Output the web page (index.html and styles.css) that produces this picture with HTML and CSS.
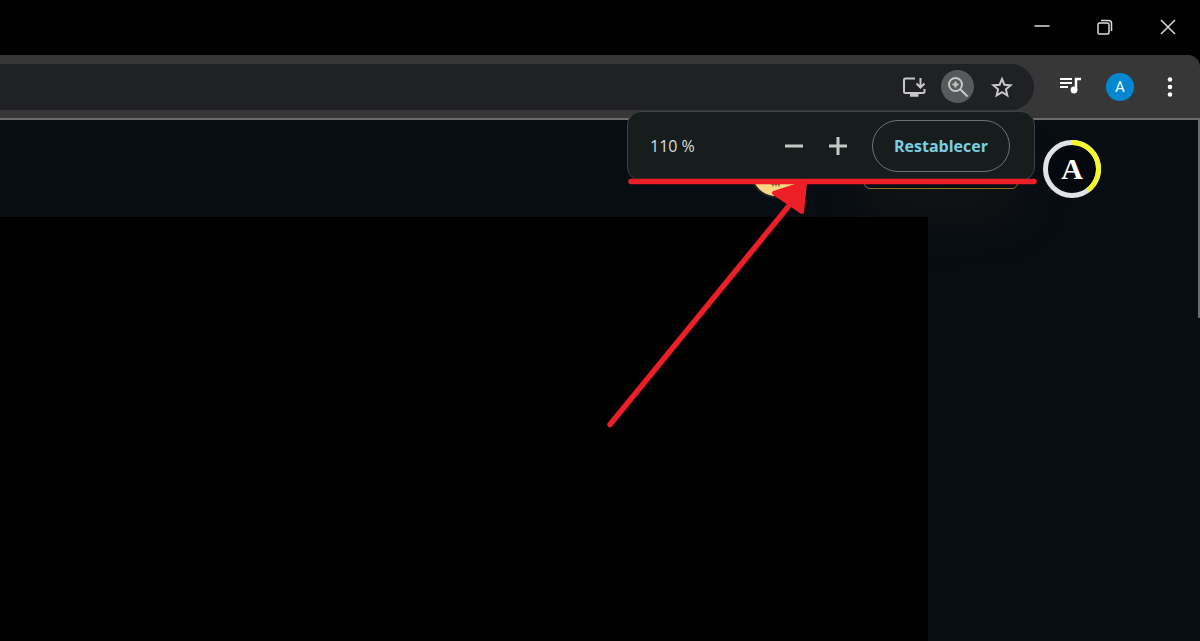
FILE: index.html
```html
<!DOCTYPE html>
<html lang="es">
<head>
    <meta charset="UTF-8">
    <meta name="viewport" content="width=device-width, initial-scale=1.0">
    <title>Zoom</title>
    <link rel="stylesheet" href="styles.css">
</head>
<body>
    <div class="titlebar">
        <button class="win-btn" aria-label="Minimizar">
            <svg width="16" height="16" viewBox="0 0 16 16"><path d="M0.5 7h15"/></svg>
        </button>
        <button class="win-btn" aria-label="Restaurar">
            <svg width="16" height="16" viewBox="0 0 16 16"><rect x="1" y="4" width="11" height="11" rx="1.5"/><path d="M4 1.5h7.5a3 3 0 0 1 3 3v7.5"/></svg>
        </button>
        <button class="win-btn" aria-label="Cerrar">
            <svg width="16" height="16" viewBox="0 0 16 16"><path d="M1 1l14 14M15 1L1 15"/></svg>
        </button>
    </div>

    <div class="toolbar">
        <div class="omnibox">
            <button class="omni-btn" aria-label="Instalar">
                <svg width="24" height="24" viewBox="0 0 24 24" fill="none" stroke="#c7c7c7" stroke-width="2"><path d="M13 3.5H3.5A1.5 1.5 0 0 0 2 5v11.500a1.500 1.500 0 0 0 1.500 1.500h17.500a1.500 1.500 0 0 0 1.500-1.500V14"/><path d="M18.500 3v9M14.500 8.500l4 4 4-4"/><path d="M8 20h8.500" stroke-width="3.500"/></svg>
            </button>
            <button class="omni-btn active" aria-label="Zoom">
                <svg width="24" height="24" viewBox="0 0 24 24" fill="none" stroke="#c7c7c7" stroke-width="2"><circle cx="9.5" cy="9.5" r="6.5"/><path d="M14 14l7.500 7.500M9.500 6.500v6M6.500 9.500h6"/></svg>
            </button>
            <button class="omni-btn" aria-label="Favoritos">
                <svg width="24" height="24" viewBox="0 0 24 24" fill="none" stroke="#c7c7c7" stroke-width="2"><path d="M12 4l2.400 5.700 6.200.500-4.700 4.100 1.400 6-5.300-3.200-5.300 3.200 1.400-6-4.700-4.100 6.200-.500z"/></svg>
            </button>
        </div>
        <button class="tool-btn" aria-label="Multimedia">
            <svg width="24" height="24" viewBox="0 0 24 24" fill="none" stroke="#fff" stroke-width="2"><path d="M2 4h12M2 8h12M2 12h8"/><path d="M18 15.500V4h5" stroke-width="2.500"/><circle cx="16" cy="15" r="3.400" fill="#fff" stroke="none"/></svg>
        </button>
        <button class="profile" aria-label="Perfil">A</button>
        <button class="tool-btn" aria-label="Menú">
            <svg width="24" height="24" viewBox="0 0 24 24" fill="#fff"><circle cx="12" cy="4.500" r="2.300"/><circle cx="12" cy="12" r="2.300"/><circle cx="12" cy="19.500" r="2.300"/></svg>
        </button>
    </div>

    <div class="page">
        <header class="site-header">
            <svg class="coin" width="52" height="52" viewBox="0 0 52 52">
                <circle cx="26" cy="26" r="25" fill="#f8d783" stroke="#172621" stroke-width="2"/>
                <path d="M21 38h9M23 38v2.500M26 38v2.500M29 38v2.500" stroke="#5c4a28" fill="none"/>
            </svg>
            <div class="gold-box"></div>
            <div class="avatar">
                <svg width="58" height="58" viewBox="0 0 58 58" fill="none" stroke-width="5">
                    <circle cx="29" cy="29" r="26.5" stroke="#e1e3e6"/>
                    <path d="M29 2.500A26.500 26.500 0 0 1 44.500 50.500" stroke="#f7f82c"/>
                </svg>
                <span class="avatar-letter">A</span>
            </div>
        </header>
        <main class="content">
            <div class="video"></div>
            <aside class="sidebar"></aside>
        </main>
        <div class="scroll-thumb"></div>
    </div>

    <div class="zoom-popup">
        <span class="zoom-value">110 %</span>
        <button class="zoom-btn" aria-label="Reducir">
            <svg width="20" height="20" viewBox="0 0 20 20"><path d="M1 10h18"/></svg>
        </button>
        <button class="zoom-btn" aria-label="Ampliar">
            <svg width="20" height="20" viewBox="0 0 20 20"><path d="M1 10h18M10 1v18"/></svg>
        </button>
        <button class="reset-btn">Restablecer</button>
    </div>

    <!-- red underline and arrow -->
    <svg class="marker" width="430" height="250" viewBox="0 0 430 250" fill="none" stroke="#ec1f27" stroke-linecap="round" stroke-linejoin="round">
        <path d="M24 3.500h403" stroke-width="5.500"/>
        <path d="M3 246.500L181 29" stroke-width="5.500"/>
        <path d="M198 5L195 34L167 15Z" fill="#ec1f27" stroke-width="4"/>
    </svg>
</body>
</html>
```

FILE: styles.css
```css
* {
    box-sizing: border-box;
}

body {
    margin: 0;
    min-height: 100vh;
    display: flex;
    flex-direction: column;
    position: relative;
    background-color: #000;
    font-family: "Open Sans", "Noto Sans", sans-serif;
}

button {
    border: none;
    background: none;
    padding: 0;
    display: flex;
    align-items: center;
    justify-content: center;
    cursor: pointer;
}

/* Window buttons */
.titlebar {
    height: 55px;
    display: flex;
    justify-content: flex-end;
    align-items: center;
    gap: 31px;
    padding: 0 16px 2px 0;
}

.win-btn {
    width: 32px;
    height: 32px;
}

.win-btn svg {
    fill: none;
    stroke: #dcdcdc;
    stroke-width: 1.5;
}

/* Toolbar */
.toolbar {
    height: 65px;
    display: flex;
    align-items: center;
    padding-right: 18px;
    background-color: #373737;
    border-bottom: 2px solid #6b6c6d;
    border-top-right-radius: 12px;
}

.omnibox {
    flex: 1;
    height: 46px;
    display: flex;
    align-items: center;
    justify-content: flex-end;
    gap: 11px;
    padding-right: 16px;
    margin-right: 24px;
    background-color: #202124;
    border-radius: 0 23px 23px 0;
}

.omni-btn {
    width: 33px;
    height: 33px;
    border-radius: 50%;
}

.omni-btn.active {
    background-color: #57595b;
}

.tool-btn {
    width: 24px;
    height: 24px;
}

.profile {
    width: 28px;
    height: 28px;
    margin: 0 24px;
    border-radius: 50%;
    background-color: #0288d1;
    color: #fff;
    font-family: Roboto, sans-serif;
    font-size: 15px;
}

/* Page */
.page {
    flex: 1;
    display: flex;
    flex-direction: column;
    position: relative;
    background-color: #080d14;
}

.site-header {
    height: 97px;
    display: flex;
    align-items: center;
    justify-content: flex-end;
    padding-right: 99px;
}

.coin {
    margin: 6px 62px 0 0;
}

.gold-box {
    width: 154px;
    height: 40px;
    margin-right: 25px;
    border: 1px solid #8b7223;
    border-radius: 6px;
    box-shadow: 0 20px 60px rgba(90, 75, 10, 0.2);
}

.avatar {
    width: 58px;
    height: 58px;
    display: grid;
    place-items: center;
    border-radius: 50%;
    background-color: #05080d;
}

.avatar svg,
.avatar-letter {
    grid-area: 1 / 1;
}

.avatar-letter {
    color: #fff;
    font-family: "Liberation Serif", serif;
    font-size: 30px;
    font-weight: bold;
    line-height: 32px;
}

.content {
    flex: 1;
    display: flex;
}

.video {
    flex: 1;
    background-color: #000;
}

.sidebar {
    width: 272px;
}

.scroll-thumb {
    position: absolute;
    top: 0;
    right: 0;
    width: 2px;
    height: 198px;
    background-color: #6b6c6d;
}

/* Zoom popup */
.zoom-popup {
    position: absolute;
    top: 111px;
    right: 165px;
    width: 408px;
    height: 70px;
    display: flex;
    align-items: center;
    padding: 0 24px 0 22px;
    background-color: #171d1d;
    border: 1px solid #3c4242;
    border-radius: 14px;
}

.zoom-value {
    flex: 1;
    color: #d9dddd;
    font-size: 16px;
}

.zoom-btn {
    width: 20px;
    height: 20px;
    margin-right: 24px;
}

.zoom-btn svg {
    fill: none;
    stroke: #c4c9c8;
    stroke-width: 3;
}

.reset-btn {
    width: 138px;
    height: 52px;
    border: 1px solid #6b7373;
    border-radius: 26px;
    color: #77cfe3;
    font-family: inherit;
    font-size: 16px;
    font-weight: bold;
}

.marker {
    position: absolute;
    top: 178px;
    right: 163px;
}
```
